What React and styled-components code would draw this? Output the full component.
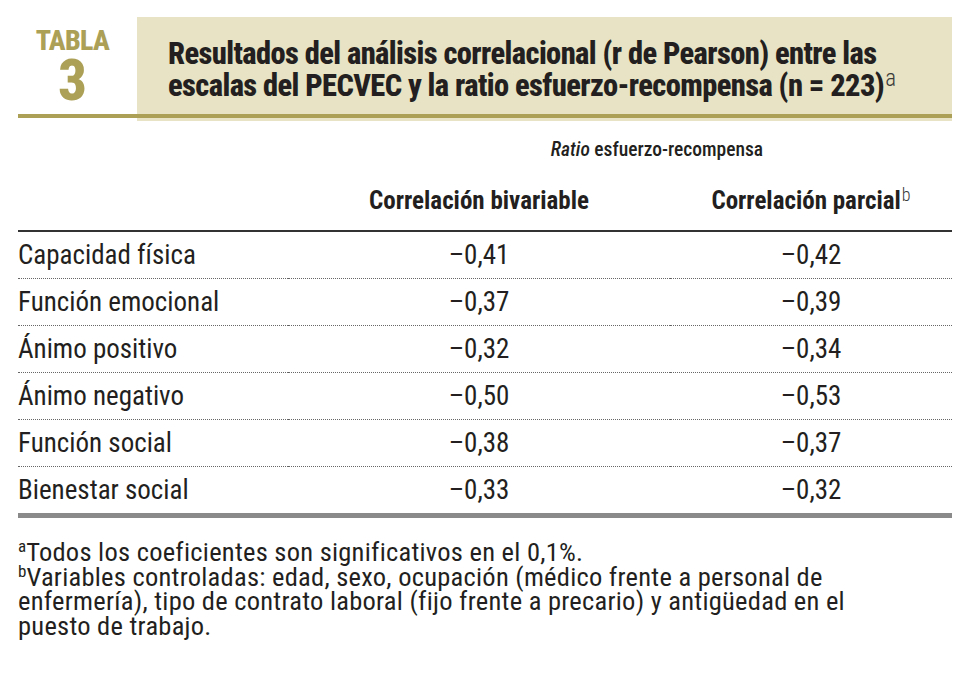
import React from 'react';
import styled, { createGlobalStyle } from 'styled-components';

const GlobalStyle = createGlobalStyle`
  html, body { margin: 0; padding: 0; background: #ffffff; }
  body {
    font-family: Roboto, "Liberation Sans", Arial, sans-serif;
    font-stretch: 75%;
    color: #231f20;
  }
`;

const OLIVE = '#aca057';
const BEIGE = '#e8e3c4';
const INK = '#231f20';

const Page = styled.div`
  width: 958px;
  box-sizing: border-box;
  padding: 17px 6px 30px 18px;
`;

const Header = styled.header`
  display: grid;
  grid-template-columns: 119px 1fr;
  grid-template-rows: 97px 4px 3px;
`;

const Label = styled.div`
  grid-column: 1;
  grid-row: 1;
  display: flex;
  flex-direction: column;
  align-items: center;
  padding: 10px 10px 0 0;
  color: ${OLIVE};
  font-weight: 800;
`;

const LabelWord = styled.span`
  font-size: 28px;
  line-height: 28px;
  letter-spacing: -0.7px;
`;

const LabelNumber = styled.span`
  font-size: 57px;
  line-height: 48px;
  margin-top: 2px;
`;

const TitleBox = styled.div`
  grid-column: 2;
  grid-row: 1 / 4;
  background: ${BEIGE};
  padding: 21px 0 0 31px;
  overflow: hidden;
`;

const Title = styled.h1`
  margin: 0;
  font-weight: 800;
  font-size: 30.5px;
  line-height: 32px;
  letter-spacing: -0.6px;
  color: ${INK};
  white-space: nowrap;
`;

const TitleSup = styled.span`
  font-weight: 300;
  font-size: 23px;
  line-height: 0;
  vertical-align: 10px;
  letter-spacing: 0;
  color: #3a3a3a;
  margin-left: 1px;
`;

const Rule = styled.div`
  grid-column: 1 / 3;
  grid-row: 2;
  background: ${OLIVE};
`;

const Table = styled.div`
  display: grid;
  grid-template-columns: 270px 382px 282px;
`;

const GroupCaption = styled.div`
  grid-column: 2 / 4;
  padding: 16px 0 0 74px;
  text-align: center;
  font-weight: 500;
  font-size: 19.5px;
  line-height: 25px;
  color: ${INK};
`;

const HeadCell = styled.div`
  grid-column: ${p => p.$col};
  padding: 24px 0 14px;
  border-bottom: 2px solid #333;
  text-align: center;
  font-weight: 700;
  font-size: 25px;
  line-height: 30px;
  white-space: nowrap;
`;

const HeadSup = styled.span`
  font-weight: 300;
  font-size: 18px;
  line-height: 0;
  vertical-align: 8px;
  color: #3a3a3a;
  margin-left: 1px;
`;

const Cell = styled.div`
  font-size: 27px;
  line-height: 46px;
  text-align: ${p => (p.$label ? 'left' : 'center')};
  border-bottom: ${p => (p.$last ? 'none' : '1px dotted #666')};
  color: ${INK};
  white-space: nowrap;
`;

const BottomRule = styled.div`
  height: 5px;
  background: #8a8a8a;
`;

const Notes = styled.div`
  margin-top: 22px;
  font-size: 26.5px;
  line-height: 24.5px;
  letter-spacing: 0.25px;
  color: ${INK};
`;

const Note = styled.p`
  margin: 0;
`;

const NoteMark = styled.sup`
  font-size: 17px;
  line-height: 0;
  vertical-align: 9px;
  letter-spacing: 0;
`;

const rows = [
  ['Capacidad física', '–0,41', '–0,42'],
  ['Función emocional', '–0,37', '–0,39'],
  ['Ánimo positivo', '–0,32', '–0,34'],
  ['Ánimo negativo', '–0,50', '–0,53'],
  ['Función social', '–0,38', '–0,37'],
  ['Bienestar social', '–0,33', '–0,32'],
];

export default function App() {
  return (
    <>
      <GlobalStyle />
      <Page>
        <Header>
          <Label>
            <LabelWord>TABLA</LabelWord>
            <LabelNumber>3</LabelNumber>
          </Label>
          <TitleBox>
            <Title>
              Resultados del análisis correlacional (r de Pearson) entre las
              <br />
              escalas del PECVEC y la ratio esfuerzo-recompensa (n = 223)
              <TitleSup>a</TitleSup>
            </Title>
          </TitleBox>
          <Rule />
        </Header>

        <Table>
          <GroupCaption>
            <i>Ratio</i> esfuerzo-recompensa
          </GroupCaption>
          <HeadCell $col={1} />
          <HeadCell $col={2}>Correlación bivariable</HeadCell>
          <HeadCell $col={3}>
            Correlación parcial<HeadSup>b</HeadSup>
          </HeadCell>
          {rows.map((r, i) => {
            const last = i === rows.length - 1;
            return (
              <React.Fragment key={r[0]}>
                <Cell $label $last={last}>{r[0]}</Cell>
                <Cell $last={last}>{r[1]}</Cell>
                <Cell $last={last}>{r[2]}</Cell>
              </React.Fragment>
            );
          })}
        </Table>
        <BottomRule />

        <Notes>
          <Note>
            <NoteMark>a</NoteMark>Todos los coeficientes son significativos en el 0,1%.
          </Note>
          <Note>
            <NoteMark>b</NoteMark>Variables controladas: edad, sexo, ocupación (médico frente a personal de
            <br />
            enfermería), tipo de contrato laboral (fijo frente a precario) y antigüedad en el
            <br />
            puesto de trabajo.
          </Note>
        </Notes>
      </Page>
    </>
  );
}
